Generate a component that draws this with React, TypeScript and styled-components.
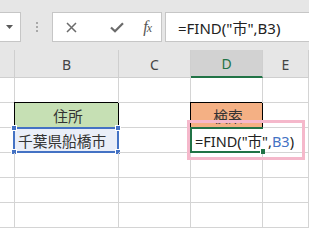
import * as React from 'react'
import styled, { createGlobalStyle, css } from 'styled-components'

const GlobalStyle = createGlobalStyle`
  html, body {
    margin: 0;
    padding: 0;
    background: #fff;
  }
  * {
    box-sizing: border-box;
  }
`

const uiFont = `"Noto Sans", "Noto Sans CJK JP", sans-serif`
const gridLine = '#d4d4d4'
const refBlue = '#4472c4'
const editGreen = '#217346'

const Screen = styled.div`
  width: 309px;
  height: 228px;
  overflow: hidden;
  background: #fff;
  font-family: ${uiFont};
  color: #262626;
`

/* ---------- formula bar ---------- */

const FormulaBar = styled.div`
  display: flex;
  align-items: flex-start;
  height: 50px;
  padding-top: 12px;
  background: #e6e6e6;
`

const Field = styled.div`
  height: 30px;
  background: #fff;
  border: 1px solid #c6c6c6;
  display: flex;
  align-items: center;
`

const NameBox = styled(Field)`
  width: 21px;
  border-left: none;
  justify-content: flex-end;
  padding-right: 7px;
`

const Grip = styled.div`
  width: 31px;
  height: 30px;
  display: flex;
  flex-direction: column;
  align-items: center;
  justify-content: center;
  gap: 2px;
`

const GripDot = styled.span`
  width: 2px;
  height: 2px;
  background: #a8a8a8;
`

const ActionBox = styled(Field)`
  width: 110px;
  padding: 0 0 0 13px;
`

const ActionIcon = styled.span`
  display: flex;
  align-items: center;
  justify-content: center;
  width: 38px;
  height: 100%;
  &:first-child {
    width: 13px;
    margin-right: 25px;
  }
`

const FxMark = styled.span`
  font-family: "Liberation Serif", serif;
  font-style: italic;
  font-size: 16px;
  color: #555;
  letter-spacing: -1px;
  margin-left: 2px;

  small {
    font-size: 12px;
  }
`

const FormulaInput = styled(Field)`
  flex: 1;
  margin-left: 3px;
  border-right: none;
  padding-left: 12px;
  font-size: 15px;
  white-space: nowrap;
  color: #222;
`

/* ---------- sheet ---------- */

const Sheet = styled.div`
  display: grid;
  grid-template-columns: 15px 104px 72px 72px 1fr;
  grid-template-rows: 28px;
  grid-auto-rows: 25px;
`

const ColHeader = styled.div<{ active?: boolean }>`
  display: flex;
  align-items: center;
  justify-content: center;
  background: #e6e6e6;
  border-right: 1px solid #cfcfcf;
  border-bottom: 1px solid #cfcfcf;
  font-size: 14px;
  color: #444;
  padding-top: 1px;

  ${({ active }) =>
    active &&
    css`
      background: #d2d2d2;
      color: ${editGreen};
      border-bottom: 2px solid ${editGreen};
    `}
`

type Tone = 'green' | 'orange' | 'picked'

const toneFill: Record<Tone, string> = {
  green: '#c6e0b4',
  orange: '#f4b084',
  picked: '#eaeef8',
}

const Cell = styled.div<{ tone?: Tone; boxed?: boolean; align?: 'left' | 'center'; open?: boolean }>`
  position: relative;
  display: flex;
  align-items: center;
  justify-content: ${({ align }) => (align === 'center' ? 'center' : 'flex-start')};
  background: ${({ tone }) => (tone ? toneFill[tone] : 'transparent')};
  border-right: 1px solid ${gridLine};
  border-bottom: 1px solid ${gridLine};
  font-size: 14.7px;
  color: #333;
  white-space: nowrap;
  padding-left: 3px;

  ${({ boxed }) =>
    boxed &&
    css`
      border-right-color: #000;
      border-bottom-color: #000;
      box-shadow: -1px -1px 0 0 #000;
    `}

  ${({ open }) =>
    open &&
    css`
      border-right-color: transparent;
      overflow: visible;
      padding-left: 4px;
      z-index: 2;
    `}
`

const RefFrame = styled.div`
  position: absolute;
  left: -2px;
  top: -1px;
  right: -1px;
  bottom: -1px;
  border: 2px solid ${refBlue};
  pointer-events: none;
`

const Handle = styled.span<{ corner: 'tl' | 'tr' | 'bl' | 'br' }>`
  position: absolute;
  width: 6px;
  height: 6px;
  background: ${refBlue};
  border: 1px solid #fff;
  ${({ corner }) => (corner[0] === 't' ? 'top: -4px;' : 'bottom: -4px;')}
  ${({ corner }) => (corner[1] === 'l' ? 'left: -4px;' : 'right: -4px;')}
`

const EditFrame = styled.div`
  position: absolute;
  left: -1px;
  top: -1px;
  width: 73px;
  bottom: -1px;
  border-top: 2px solid ${editGreen};
  border-left: 2px solid ${editGreen};
  border-bottom: 2px solid ${editGreen};
  pointer-events: none;
`

const FillHandle = styled.span`
  position: absolute;
  right: -2px;
  bottom: -3px;
  width: 5px;
  height: 5px;
  background: ${editGreen};
  border-left: 1px solid #fff;
`

const Callout = styled.div`
  position: absolute;
  left: -4px;
  top: -8px;
  width: 118px;
  height: 40px;
  border: 3px solid #f5b8cb;
  pointer-events: none;
`

const RefText = styled.span`
  color: ${refBlue};
`

const EditText = styled.span`
  position: relative;
  font-size: 14.5px;
  color: #222;
`

const CrossIcon = () => (
  <svg width="11" height="11" viewBox="0 0 11 11">
    <path d="M1 1 L10 10 M10 1 L1 10" stroke="#6b6b6b" strokeWidth="1.5" fill="none" />
  </svg>
)

const CheckIcon = () => (
  <svg width="14" height="11" viewBox="0 0 14 11">
    <path d="M1 5.5 L5 9.3 L13 1.2" stroke="#6b6b6b" strokeWidth="2.2" fill="none" />
  </svg>
)

const DropArrow = () => (
  <svg width="7" height="4" viewBox="0 0 7 4">
    <path d="M0 0 H7 L3.5 4 Z" fill="#5a5a5a" />
  </svg>
)

const columns = ['B', 'C', 'D', 'E']

export default function App() {
  const emptyRow = (key: string) => (
    <React.Fragment key={key}>
      {[0, 1, 2, 3, 4].map((i) => (
        <Cell key={i} />
      ))}
    </React.Fragment>
  )

  return (
    <Screen>
      <GlobalStyle />
      <FormulaBar>
        <NameBox>
          <DropArrow />
        </NameBox>
        <Grip>
          <GripDot />
          <GripDot />
          <GripDot />
        </Grip>
        <ActionBox>
          <ActionIcon>
            <CrossIcon />
          </ActionIcon>
          <ActionIcon>
            <CheckIcon />
          </ActionIcon>
          <ActionIcon>
            <FxMark>
              f<small>x</small>
            </FxMark>
          </ActionIcon>
        </ActionBox>
        <FormulaInput>=FIND("市",B3)</FormulaInput>
      </FormulaBar>

      <Sheet>
        <ColHeader />
        {columns.map((c) => (
          <ColHeader key={c} active={c === 'D'}>
            {c}
          </ColHeader>
        ))}

        {emptyRow('r1')}

        <Cell />
        <Cell tone="green" boxed align="center">
          住所
        </Cell>
        <Cell />
        <Cell tone="orange" boxed align="center">
          検索
        </Cell>
        <Cell />

        <Cell />
        <Cell tone="picked">
          千葉県船橋市
          <RefFrame>
            <Handle corner="tl" />
            <Handle corner="tr" />
            <Handle corner="bl" />
            <Handle corner="br" />
          </RefFrame>
        </Cell>
        <Cell />
        <Cell open>
          <EditText>
            =FIND("市",<RefText>B3</RefText>)
          </EditText>
          <EditFrame>
            <FillHandle />
          </EditFrame>
          <Callout />
        </Cell>
        <Cell />

        {emptyRow('r4')}
        {emptyRow('r5')}
        {emptyRow('r6')}
        {emptyRow('r7')}
      </Sheet>
    </Screen>
  )
}
